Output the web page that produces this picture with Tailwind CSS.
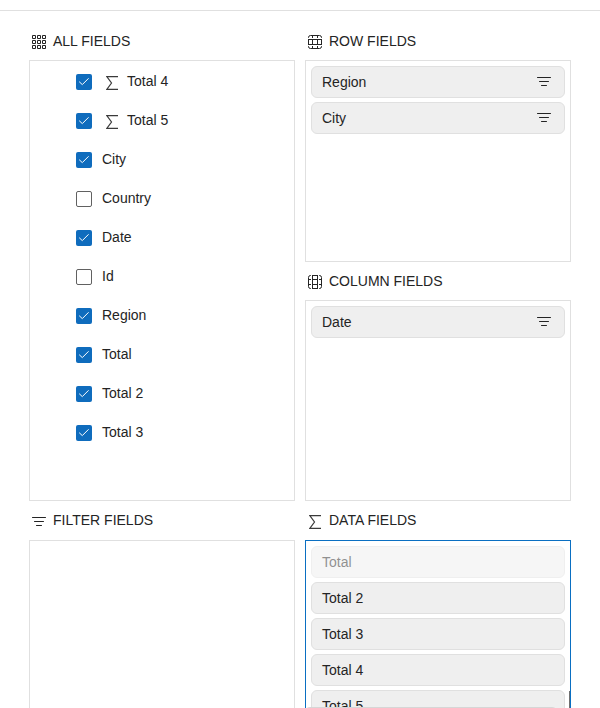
<!DOCTYPE html>
<html lang="en">
<head>
<meta charset="utf-8">
<title>Field chooser</title>
<script src="https://cdn.jsdelivr.net/npm/@tailwindcss/browser@4"></script>
</head>
<body class="bg-white">
<svg class="hidden">
  <defs>
    <symbol id="i-grid" viewBox="0 0 14 14"><path fill="none" stroke="#242424" d="M.5.5h3v3h-3zM5.500.5h3v3h-3zM10.500.5h3v3h-3zM.5 5.500h3v3h-3zM5.500 5.500h3v3h-3zM10.500 5.500h3v3h-3zM.5 10.500h3v3h-3zM5.500 10.500h3v3h-3zM10.500 10.500h3v3h-3z"/></symbol>
    <symbol id="i-row" viewBox="0 0 14 14"><path fill="none" stroke="#242424" d="M0 4.500h14M0 9.500h14M.5 4v6M13.500 4v6M4.500 1v2M9.500 1v2M4.500 4v6M9.500 4v6M4.500 11v2M9.500 11v2M.5 3v-.5a2 2 0 0 1 2-2h9a2 2 0 0 1 2 2v.5M.5 11v.5a2 2 0 0 0 2 2h9a2 2 0 0 0 2-2v-.5"/></symbol>
    <symbol id="i-filter" viewBox="0 0 14 9"><path fill="none" stroke="#242424" stroke-linecap="round" d="M.5.5h13M2.500 4.500h9M4.500 8.500h5"/></symbol>
    <symbol id="i-sigma" viewBox="0 0 12 14"><path fill="none" stroke="#3a3a3a" stroke-width="1.2" d="M12 .6H.8L5.500 7 .8 13.400H12"/></symbol>
    <symbol id="i-check" viewBox="0 0 16 16"><path fill="none" stroke="#fff" stroke-linecap="round" stroke-linejoin="round" d="M3.500 8l2.800 2.600 6-6"/></symbol>
  </defs>
</svg>
<div class="h-[708px] w-[600px] overflow-hidden font-['Liberation_Sans',Arial,sans-serif] text-sm leading-5 text-[#242424]">
  <div class="h-[11px] border-b border-[#e0e0e0]"></div>
  <div class="grid grid-cols-[266px_266px] gap-x-[10px] pl-[29px]">
    <section>
      <h2 class="flex h-[49px] gap-[7px] pt-5 pl-[3px]"><svg class="mt-1 size-3.5"><use href="#i-grid"/></svg>ALL FIELDS</h2>
      <ul id="all" class="h-[441px] border border-[#e0e0e0] pl-[46px]"></ul>
      <h2 class="flex h-[39px] gap-[7px] pt-[9px] pl-[3px]"><svg class="mt-[7px] h-[9px] w-3.5"><use href="#i-filter"/></svg>FILTER FIELDS</h2>
      <div class="h-[200px] border border-[#e0e0e0]"></div>
    </section>
    <section>
      <h2 class="flex h-[49px] gap-[7px] pt-5 pl-[3px]"><svg class="mt-1 size-3.5"><use href="#i-row"/></svg>ROW FIELDS</h2>
      <div class="flex h-[202px] flex-col gap-1 border border-[#e0e0e0] p-[5px]">
        <div class="flex h-8 items-center justify-between rounded-md border border-[#e0e0e0] bg-[#efefef] pr-[13px] pl-2.5">Region<svg class="mb-px h-[9px] w-3.5"><use href="#i-filter"/></svg></div>
        <div class="flex h-8 items-center justify-between rounded-md border border-[#e0e0e0] bg-[#efefef] pr-[13px] pl-2.5">City<svg class="mb-px h-[9px] w-3.5"><use href="#i-filter"/></svg></div>
      </div>
      <h2 class="flex h-[38px] gap-[7px] pt-[9px] pl-[3px]"><svg class="mt-1 size-3.5 rotate-90"><use href="#i-row"/></svg>COLUMN FIELDS</h2>
      <div class="h-[201px] border border-[#e0e0e0] p-[5px]">
        <div class="flex h-8 items-center justify-between rounded-md border border-[#e0e0e0] bg-[#efefef] pr-[13px] pl-2.5">Date<svg class="mb-px h-[9px] w-3.5"><use href="#i-filter"/></svg></div>
      </div>
      <h2 class="flex h-[39px] gap-2 pt-[9px] pl-1"><svg class="mt-[5px] h-3.5 w-3"><use href="#i-sigma"/></svg>DATA FIELDS</h2>
      <div class="relative flex h-[201px] flex-col gap-1 border border-[#0a6fc2] p-[5px]">
        <div class="flex h-8 shrink-0 items-center rounded-md border border-[#e0e0e0] bg-[#efefef] pl-2.5 opacity-50">Total</div>
        <div class="flex h-8 shrink-0 items-center rounded-md border border-[#e0e0e0] bg-[#efefef] pl-2.5">Total 2</div>
        <div class="flex h-8 shrink-0 items-center rounded-md border border-[#e0e0e0] bg-[#efefef] pl-2.5">Total 3</div>
        <div class="flex h-8 shrink-0 items-center rounded-md border border-[#e0e0e0] bg-[#efefef] pl-2.5">Total 4</div>
        <div class="flex h-8 shrink-0 items-center rounded-md border border-[#e0e0e0] bg-[#efefef] pl-2.5">Total 5</div>
        <div class="absolute top-[150px] right-0 h-12 w-px bg-[#707070]"></div>
        <div class="absolute top-[166px] -left-0.5 h-8 w-[254px] rounded-t-md border border-[#d6d6d6] bg-[#efefef]"></div>
      </div>
    </section>
  </div>
</div>
<template id="on"><span class="mr-2.5 size-4 rounded-xs bg-[#0f6cbd]"><svg class="size-4"><use href="#i-check"/></svg></span></template>
<template id="off"><span class="mr-2.5 size-4 rounded-xs border border-[#616161]"></span></template>
<template id="sum"><svg class="mt-0.5 mr-[9px] ml-1 h-3.5 w-3"><use href="#i-sigma"/></svg></template>
<script>
const fields = [['Total 4', 1, 1], ['Total 5', 1, 1], ['City', 1], ['Country', 0], ['Date', 1], ['Id', 0], ['Region', 1], ['Total', 1], ['Total 2', 1], ['Total 3', 1]];
const part = id => document.getElementById(id).content.cloneNode(true);
for (const [name, checked, sum] of fields) {
  const li = document.createElement('li');
  li.className = 'flex h-[39px] pt-[13px]';
  li.append(part(checked ? 'on' : 'off'));
  if (sum) li.append(part('sum'));
  const label = document.createElement('span');
  label.className = '-mt-[3px]';
  label.textContent = name;
  li.append(label);
  document.getElementById('all').append(li);
}
</script>
</body>
</html>
